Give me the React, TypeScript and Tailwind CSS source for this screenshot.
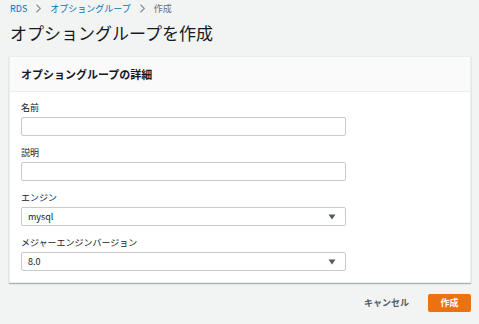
import React from "react";

const Chevron = () => (
  <svg width="7" height="9" viewBox="0 0 7 9" className="mx-[8px]">
    <path d="M1.5 0.8 L5.3 4.5 L1.5 8.2" fill="none" stroke="#879596" strokeWidth="1.2" />
  </svg>
);

const Caret = () => (
  <svg width="8" height="6" viewBox="0 0 8 6">
    <path d="M0.5 0.5 H7.5 L4 5.5 Z" fill="#545b64" />
  </svg>
);

const Field = ({ label, children }: { label: string; children: React.ReactNode }) => (
  <div className="flex flex-col">
    <div className="h-[13px] text-[9px] leading-[13px] text-[#16191f]">{label}</div>
    <div className="mt-[3px]">{children}</div>
  </div>
);

const Input = () => (
  <div className="w-[325px] h-[19px] border border-[#c6cccc] rounded-[2px] bg-white" />
);

const Select = ({ value }: { value: string }) => (
  <div className="w-[325px] h-[19px] border border-[#c6cccc] rounded-[2px] bg-white flex items-center justify-between pl-[6px] pr-[9px]">
    <span className="text-[9px] leading-none text-[#16191f]">{value}</span>
    <Caret />
  </div>
);

export default function App() {
  return (
    <div
      className="w-[479px] h-[324px] bg-[#f2f3f3] overflow-hidden"
      style={{ fontFamily: '"Noto Sans CJK JP", "Noto Sans", sans-serif' }}
    >
      <div className="pl-[10px] pt-[4px] h-[13px] flex items-center text-[9px] leading-none">
        <span className="text-[#0073bb]">RDS</span>
        <Chevron />
        <span className="text-[#0073bb]">オプショングループ</span>
        <Chevron />
        <span className="text-[#687078]">作成</span>
      </div>
      <div className="pl-[10px] mt-[9px] h-[22px] text-[17px] leading-[22px] text-[#16191f]">
        オプショングループを作成
      </div>
      <div className="ml-[9px] mr-[8px] mt-[12px] bg-white border border-[#eaeded] shadow-[0_1px_1px_0_rgba(0,28,36,0.3)]">
        <div className="h-[35px] bg-[#fafafa] border-b border-[#eaeded] flex items-center pl-[11px]">
          <span className="text-[11px] font-bold text-[#16191f]">オプショングループの詳細</span>
        </div>
        <div className="pl-[11px] pt-[9px] pb-[11px] flex flex-col gap-[10px]">
          <Field label="名前">
            <Input />
          </Field>
          <Field label="説明">
            <Input />
          </Field>
          <Field label="エンジン">
            <Select value="mysql" />
          </Field>
          <Field label="メジャーエンジンバージョン">
            <Select value="8.0" />
          </Field>
        </div>
      </div>
      <div className="mt-[11px] mr-[8px] flex justify-end items-center">
        <span className="text-[9px] font-bold text-[#545b64] mr-[19px]">キャンセル</span>
        <div className="w-[43px] h-[18px] bg-[#ec7211] rounded-[2px] flex items-center justify-center text-[9px] font-bold text-white">
          作成
        </div>
      </div>
    </div>
  );
}
